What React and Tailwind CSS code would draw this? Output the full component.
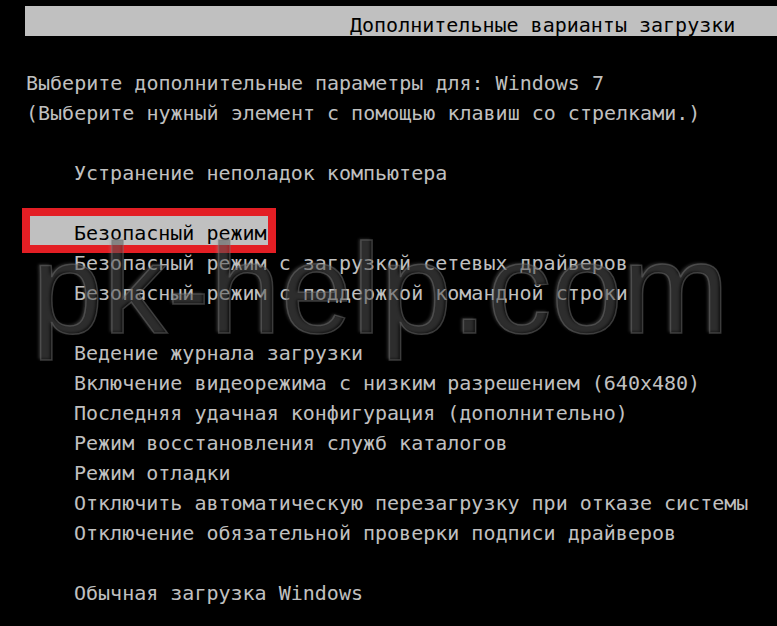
export default function App() {
  const mono = { fontFamily: '"DejaVu Sans Mono", "Liberation Mono", monospace' };
  const rows = [
    { t: "Выберите дополнительные параметры для: Windows 7" },
    { t: "(Выберите нужный элемент с помощью клавиш со стрелками.)" },
    { t: "" },
    { t: "Устранение неполадок компьютера", i: true },
    { t: "" },
    { t: "Безопасный режим", i: true, sel: true },
    { t: "Безопасный режим с загрузкой сетевых драйверов", i: true },
    { t: "Безопасный режим с поддержкой командной строки", i: true },
    { t: "" },
    { t: "Ведение журнала загрузки", i: true },
    { t: "Включение видеорежима с низким разрешением (640x480)", i: true },
    { t: "Последняя удачная конфигурация (дополнительно)", i: true },
    { t: "Режим восстановления служб каталогов", i: true },
    { t: "Режим отладки", i: true },
    { t: "Отключить автоматическую перезагрузку при отказе системы", i: true },
    { t: "Отключение обязательной проверки подписи драйверов", i: true },
    { t: "" },
    { t: "Обычная загрузка Windows", i: true },
  ];
  return (
    <div
      className="relative w-[777px] h-[626px] overflow-hidden bg-black text-[20px] text-[#c0c0c0]"
      style={mono}
    >
      <div className="mt-[6px] ml-[25px] h-[30px] overflow-hidden bg-[#c0c0c0] pl-[325px] leading-[38px] text-black whitespace-pre">
        Дополнительные варианты загрузки
      </div>
      <div className="mt-[32px] pl-[26px] flex flex-col">
        {rows.map((r, k) =>
          r.sel ? (
            <div key={k} className="flex -mt-[10px] -mb-[5px]">
              <div className="-ml-[4px] h-[45px] border-[8px] border-[#e31e24] bg-[#c0c0c0] pl-[44px] pr-[1px] leading-[34px] text-black overflow-hidden whitespace-pre">
                {r.t}
              </div>
            </div>
          ) : (
            <div
              key={k}
              className={`h-[30px] leading-[30px] whitespace-pre ${r.i ? "pl-[48px]" : ""}`}
            >
              {r.t}
            </div>
          )
        )}
      </div>
      <div
        className="pointer-events-none absolute left-[32px] top-[225px] text-[128px] leading-[128px] whitespace-pre text-[rgba(40,40,40,0.35)] [-webkit-text-stroke:1.5px_rgba(120,120,120,0.45)] [text-shadow:-2px_-1px_3px_rgba(160,160,160,0.3)]"
        style={{ fontFamily: '"Liberation Sans", Arial, sans-serif' }}
      >
        pk-help.com
      </div>
    </div>
  );
}
